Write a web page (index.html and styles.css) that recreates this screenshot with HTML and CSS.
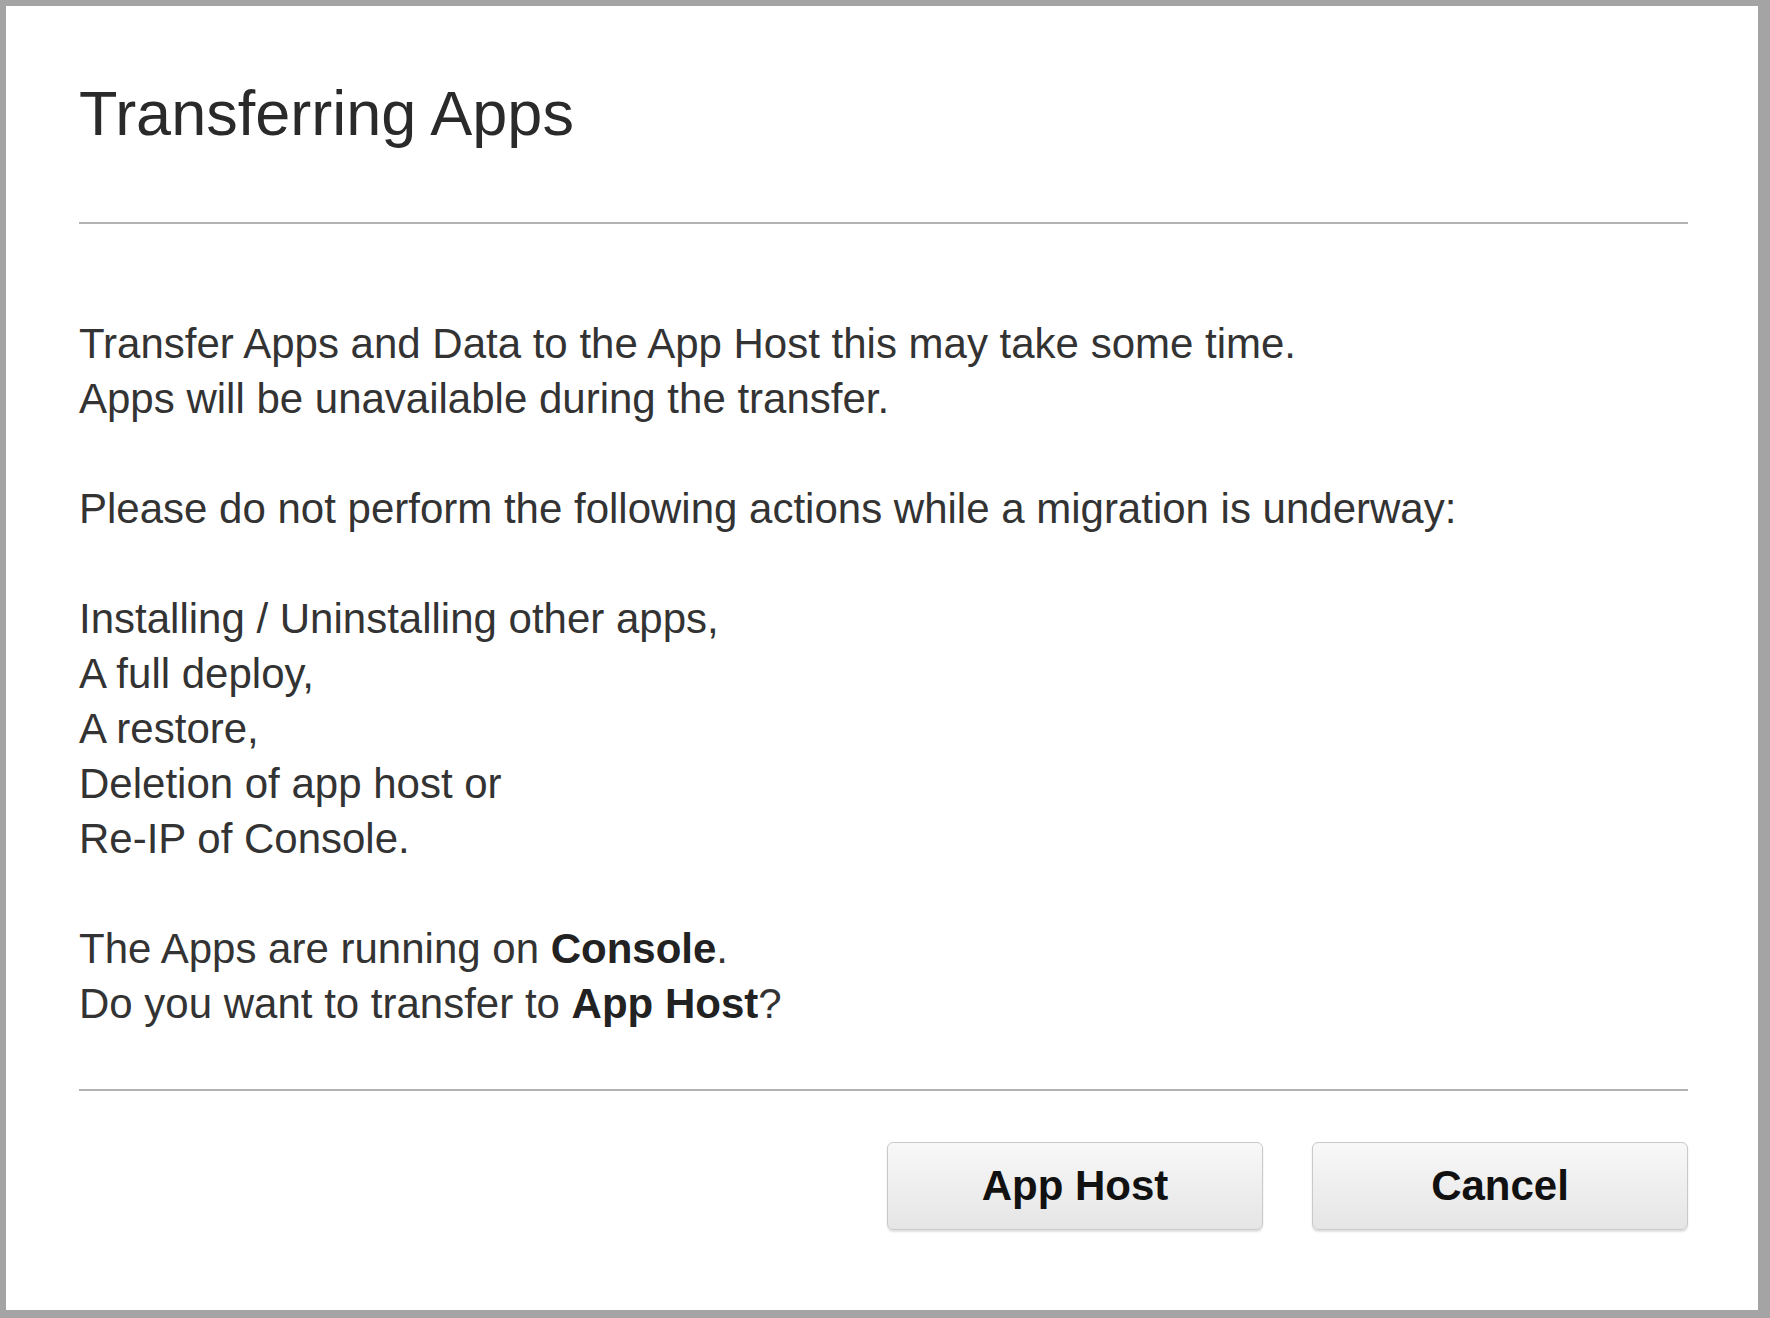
FILE: index.html
```html
<!DOCTYPE html>
<html lang="en">
<head>
<meta charset="utf-8">
<title>Transferring Apps</title>
<link rel="stylesheet" href="styles.css">
</head>
<body>
<div class="dialog">
  <h1 class="title">Transferring Apps</h1>
  <hr class="rule rule-top">
  <div class="message">
    Transfer Apps and Data to the App Host this may take some time.<br>
    Apps will be unavailable during the transfer.<br>
    <br>
    Please do not perform the following actions while a migration is underway:<br>
    <br>
    Installing / Uninstalling other apps,<br>
    A full deploy,<br>
    A restore,<br>
    Deletion of app host or<br>
    Re-IP of Console.<br>
    <br>
    The Apps are running on <b>Console</b>.<br>
    Do you want to transfer to <b>App Host</b>?
  </div>
  <hr class="rule rule-bottom">
  <div class="actions">
    <button class="btn" type="button">App Host</button>
    <button class="btn" type="button">Cancel</button>
  </div>
</div>
</body>
</html>
```

FILE: styles.css
```css
html, body {
  margin: 0;
  padding: 0;
  background: #ffffff;
}

.dialog {
  box-sizing: border-box;
  width: 1770px;
  height: 1318px;
  border-style: solid;
  border-color: #a4a4a4;
  border-width: 6px 12px 8px 6px;
  background: #ffffff;
  padding: 0 70px 0 73px;
  display: flex;
  flex-direction: column;
  font-family: "Liberation Sans", Arial, sans-serif;
  color: #333333;
}

.title {
  margin: 69px 0 0 0;
  font-size: 63px;
  line-height: 76px;
  font-weight: normal;
  color: #2a2a2a;
}

.rule {
  border: 0;
  height: 2px;
  margin: 0;
  background: #b3b3b3;
}

.rule-top {
  margin-top: 71px;
}

.message {
  margin-top: 92px;
  font-size: 42px;
  line-height: 55px;
  color: #333333;
}

.message b {
  color: #222222;
}

.rule-bottom {
  margin-top: 58px;
}

.actions {
  display: flex;
  justify-content: flex-end;
  gap: 49px;
  margin-top: 51px;
}

.btn {
  box-sizing: border-box;
  width: 376px;
  height: 88px;
  border: 1px solid #c9c9c9;
  border-radius: 6px;
  background: linear-gradient(#f8f8f8, #e5e5e5);
  box-shadow: 0 2px 2px rgba(0, 0, 0, 0.12);
  font-family: "Liberation Sans", Arial, sans-serif;
  font-size: 42px;
  font-weight: bold;
  color: #111111;
  padding: 0;
  cursor: pointer;
}
```
